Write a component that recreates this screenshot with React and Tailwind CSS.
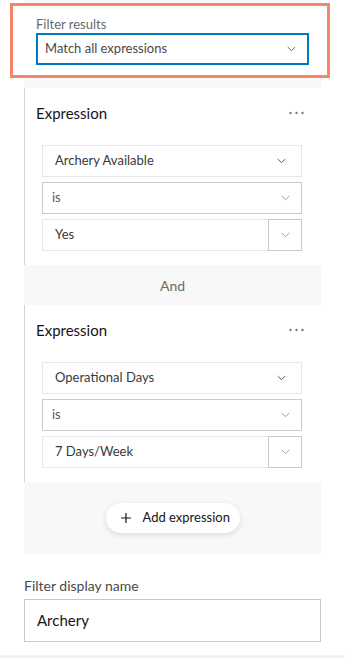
import React from "react";

const Chevron = ({ color = "#7a7a7a" }) => (
  <svg width="9" height="6" viewBox="0 0 9 6">
    <polyline points="0.7,1 4.5,4.6 8.3,1" fill="none" stroke={color} strokeWidth="1" />
  </svg>
);

const Dots = () => (
  <svg width="15" height="4" viewBox="0 0 15 4">
    <circle cx="1.5" cy="2" r="1.2" fill="#7a7a7a" />
    <circle cx="7.5" cy="2" r="1.2" fill="#7a7a7a" />
    <circle cx="13.5" cy="2" r="1.2" fill="#7a7a7a" />
  </svg>
);

const ExpressionCard = ({ field, value }) => (
  <div className="border-l border-[#d4d4d4] bg-white h-[177px] pt-[15px] pl-[11px] pr-[17px]">
    <div className="h-[20px] flex items-center justify-between">
      <span className="text-[15px] text-[#151515]">Expression</span>
      <Dots />
    </div>
    <div className="mt-[22px] ml-[6px] mr-[2px] flex flex-col gap-[5px]">
      <div className="h-[32px] border border-[#e6e6e6] flex items-center justify-between pl-[12px] pr-[15px]">
        <span className="text-[13px] text-[#3a3a3a]">{field}</span>
        <Chevron color="#5a5a5a" />
      </div>
      <div className="h-[32px] border border-[#cacaca] flex items-center justify-between pl-[9px] pr-[11px]">
        <span className="text-[13px] text-[#5a5a5a]">is</span>
        <Chevron color="#9a9a9a" />
      </div>
      <div className="h-[32px] flex">
        <div className="flex-1 border border-[#e6e6e6] border-r-0 flex items-center pl-[12px]">
          <span className="text-[13px] text-[#3a3a3a]">{value}</span>
        </div>
        <div className="w-[34px] border border-[#cacaca] flex items-center justify-center">
          <Chevron color="#9a9a9a" />
        </div>
      </div>
    </div>
  </div>
);

export default function App() {
  return (
    <div
      className="w-[345px] h-[658px] bg-white overflow-hidden"
      style={{ fontFamily: "Lato, 'Noto Sans', sans-serif" }}
    >
      <div className="px-[24px]">
        <div className="bg-[#f8f8f8] pt-[3px] pb-[10px]">
          <div className="ml-[-14px] mr-[-9px] border-[3px] border-[#f5866a] bg-white h-[75px] pt-[10px] pl-[23px] pr-[18px]">
            <div className="h-[16px] leading-[16px] text-[13px] text-[#6a6a6a]">Filter results</div>
            <div className="mt-[1px] h-[32px] border-2 border-[#007ac2] flex items-center justify-between pl-[7px] pr-[11px]">
              <span className="text-[13px] text-[#4a4a4a]">Match all expressions</span>
              <Chevron color="#6a6a6a" />
            </div>
          </div>
        </div>
        <ExpressionCard field="Archery Available" value="Yes" />
        <div className="h-[40px] bg-[#f8f8f8] flex items-center justify-center">
          <span className="text-[14px] text-[#6a6a6a]">And</span>
        </div>
        <ExpressionCard field="Operational Days" value="7 Days/Week" />
        <div className="h-[72px] bg-[#f8f8f8] flex items-center justify-center">
          <div className="h-[30px] w-[134px] rounded-full bg-white shadow-[0_2px_6px_rgba(0,0,0,0.12)] flex items-center pl-[14px]">
            <svg width="12" height="12" viewBox="0 0 12 12">
              <path d="M6 1 V11 M1 6 H11" stroke="#151515" strokeWidth="1.2" />
            </svg>
            <span className="ml-[11px] text-[13px] text-[#151515]">Add expression</span>
          </div>
        </div>
        <div className="mt-[22px] h-[20px] leading-[20px] text-[14px] text-[#4a4a4a]">Filter display name</div>
        <div className="mt-[3px] h-[43px] border border-[#c8c8c8] flex items-center pl-[12px]">
          <span className="text-[15px] text-[#151515]">Archery</span>
        </div>
      </div>
      <div className="mt-[13px] h-[3px] bg-[#f3f3f3]" />
    </div>
  );
}
